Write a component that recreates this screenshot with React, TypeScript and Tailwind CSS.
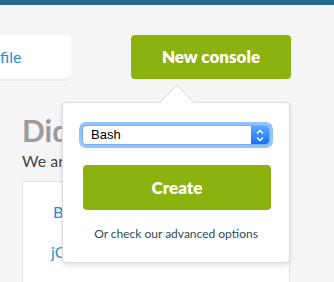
import React from "react";

export default function App() {
  return (
    <div
      className="relative w-[334px] h-[282px] overflow-hidden bg-[#f5f5f5]"
      style={{ fontFamily: "Lato, 'Open Sans', sans-serif" }}
    >
      <div className="h-[5px] bg-[#216a8a]" />
      <div className="flex mt-[30px] h-[44px]">
        <div className="w-[71px] h-[44px] bg-white rounded-r-[5px] shadow-[0_2px_0_#ececec] flex items-center">
          <span className="text-[16px] text-[#2a90c6] leading-none">file</span>
        </div>
        <button className="ml-[60px] w-[160px] h-[44px] bg-[#8cb20f] rounded-[4px] text-white font-extrabold text-[17px]">
          New console
        </button>
      </div>

      <div className="ml-[22px] w-[268px] mt-[36px]">
        <h1 className="text-[30px] font-bold text-[#9b9b9b] leading-[30px]">Did you</h1>
        <p className="mt-[6px] text-[16px] text-[#444] leading-[20px]">We are here</p>
        <div className="mt-[10px] h-[120px] bg-white border border-[#e3e3e3] pl-[30px] pt-[21px] flex flex-col gap-[22px]">
          <span className="text-[16px] text-[#2a90c6] leading-[18px]">Bootstrap</span>
          <span className="text-[16px] text-[#2a90c6] leading-[18px] -ml-[2px]">jQuery</span>
        </div>
      </div>

      <div className="absolute left-[62px] top-[102px] w-[228px] h-[161px] bg-white border border-[#dcdcdc] rounded-[4px] shadow-[0_2px_4px_rgba(0,0,0,0.12)]">
        <div className="absolute left-[101px] top-[-13px] w-[26px] h-[26px] rotate-45 bg-white border-l border-t border-[#dcdcdc]" />
        <div className="relative pt-[22px] px-[19px]">
          <div
            className="flex h-[20px] w-[188px] rounded-[4px] bg-white ring-[3px] ring-[#92c3fb] border border-[#78aef5] overflow-hidden"
            style={{ fontFamily: "'Liberation Sans', Arial, sans-serif" }}
          >
            <span className="flex-1 pl-[8px] text-[13px] leading-[18px] text-black">Bash</span>
            <div className="w-[18px] h-full bg-gradient-to-b from-[#5aa8ff] to-[#1a6ff0] flex items-center justify-center">
              <svg width="8" height="13" viewBox="0 0 8 13" fill="none" stroke="white" strokeWidth="1.4">
                <path d="M1 4.5 L4 1.5 L7 4.5" />
                <path d="M1 8.5 L4 11.5 L7 8.5" />
              </svg>
            </div>
          </div>
          <button className="mt-[20px] w-[188px] h-[45px] ml-[1px] bg-[#8cb20f] rounded-[4px] text-white font-extrabold text-[17px]">
            Create
          </button>
          <p className="mt-[17px] text-center text-[12px] text-[#2d4b5e] leading-[14px]">
            Or check our advanced options
          </p>
        </div>
      </div>
    </div>
  );
}
